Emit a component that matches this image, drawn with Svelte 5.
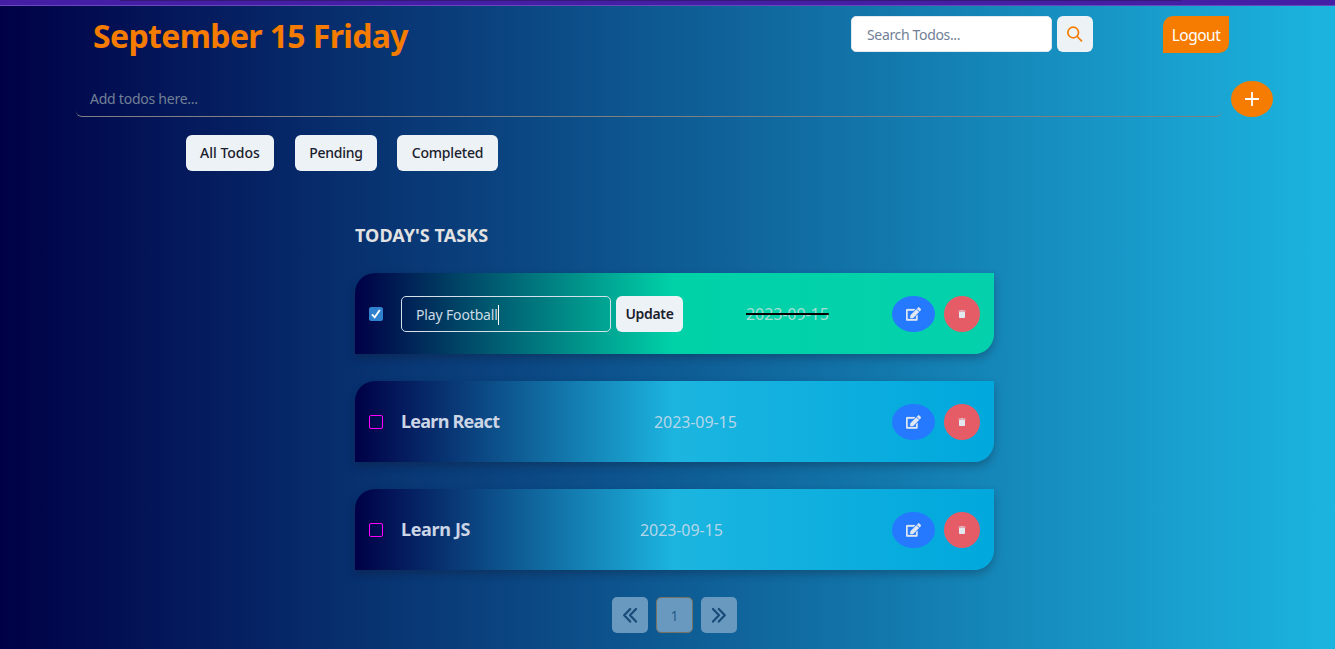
<script lang="ts">
  const tasks = [
    { id: 1, title: 'Play Football', date: '2023-09-15', done: true },
    { id: 2, title: 'Learn React', date: '2023-09-15', done: false },
    { id: 3, title: 'Learn JS', date: '2023-09-15', done: false }
  ];
</script>

<div class="page">
  <div class="strip"><i></i></div>
  <header>
    <h1>September 15 Friday</h1>
    <div class="search"><span>Search Todos...</span></div>
    <button class="find" aria-label="Search">
      <svg width="16" height="16" viewBox="0 0 16 16" fill="none" stroke="#f57c00" stroke-width="1.7" stroke-linecap="round"><circle cx="6.2" cy="6.5" r="5.3" /><path d="M10.200 10.500 14.500 14.800" /></svg>
    </button>
    <button class="logout">Logout</button>
  </header>

  <div class="add">
    <div class="field"><span>Add todos here...</span></div>
    <button aria-label="Add">
      <svg width="14" height="14" viewBox="0 0 14 14" stroke="#fff" stroke-width="1.8"><path d="M7 0V14M0 7H14" /></svg>
    </button>
  </div>

  <nav>
    <button class="f1"><span>All Todos</span></button>
    <button class="f2"><span>Pending</span></button>
    <button class="f3"><span>Completed</span></button>
  </nav>

  <main>
    <h2>TODAY'S TASKS</h2>
    {#each tasks as t (t.id)}
      <article class:done={t.done}>
        <div class="check" class:on={t.done}>
          {#if t.done}
            <svg width="10" height="10" viewBox="0 0 10 10" fill="none" stroke="#fff" stroke-width="1.9"><path d="M1 5.4 3.7 8.3 8.8 1" /></svg>
          {/if}
        </div>
        {#if t.done}
          <div class="edit"><span>{t.title}</span><i></i></div>
          <button class="update"><span>Update</span></button>
        {:else}
          <h3 class="h{t.id}">{t.title}</h3>
        {/if}
        <time class="t{t.id}">{t.date}</time>
        <div class="actions">
          <button class="pen" aria-label="Edit">
            <svg width="15" height="14" viewBox="0 0 576 512" fill="#dfe8f2" stroke="#dfe8f2" stroke-width="8"><path d="M402.6 83.2l90.2 90.2c3.8 3.8 3.8 10 0 13.800L274.400 405.600l-92.800 10.300c-12.400 1.400-22.900-9.100-21.500-21.500l10.300-92.800L388.800 83.200c3.800-3.800 10-3.800 13.800 0zm162-22.900l-48.800-48.800c-15.200-15.200-39.900-15.200-55.200 0l-35.400 35.400c-3.800 3.800-3.800 10 0 13.800l90.200 90.200c3.800 3.800 10 3.800 13.800 0l35.400-35.400c15.200-15.300 15.200-40 0-55.200zM384 346.200V448H64V128h229.800c3.200 0 6.200-1.300 8.500-3.500l40-40c7.600-7.600 2.200-20.500-8.500-20.500H48C21.500 64 0 85.500 0 112v352c0 26.500 21.500 48 48 48h352c26.500 0 48-21.500 48-48V306.200c0-10.700-12.900-16-20.500-8.500l-40 40c-2.200 2.300-3.500 5.300-3.500 8.500z" /></svg>
          </button>
          <button class="bin" aria-label="Delete">
            <svg width="8" height="8" viewBox="0 0 8 8" fill="#e2e8f0"><path opacity=".75" d="M.5.5H2.700L3 0H5L5.300.5H7.500V1.500H.5Z" /><path d="M1 1.700H7V7.200Q7 8 6.200 8H1.800Q1 8 1 7.200Z" /></svg>
          </button>
        </div>
      </article>
    {/each}
    <footer>
      <button aria-label="Previous"><svg width="16" height="16" viewBox="0 0 16 16" fill="none" stroke="#184b78" stroke-width="2.2" stroke-linecap="round" stroke-linejoin="round"><path d="M8.200 2 2.200 8.300 8.200 14.600M14 2 8 8.300 14 14.600" /></svg></button>
      <button class="num">1</button>
      <button aria-label="Next"><svg width="16" height="16" viewBox="0 0 16 16" fill="none" stroke="#184b78" stroke-width="2.2" stroke-linecap="round" stroke-linejoin="round"><path d="M2 2 8 8.300 2 14.600M7.800 2 13.800 8.300 7.800 14.600" /></svg></button>
    </footer>
  </main>
</div>

<style>
  :global(body) { margin: 0; }
  .page { box-sizing: border-box; width: 1335px; height: 649px; overflow: hidden; background: linear-gradient(to right, #000046, #1cb5e0); font-family: 'Noto Sans', 'Open Sans', sans-serif; color: #e2e8f0; }
  button { font: inherit; border: 0; margin: 0; padding: 0; display: flex; align-items: center; justify-content: center; flex: none; box-sizing: border-box; white-space: nowrap; }
  span, h1, h2, h3, time { white-space: nowrap; }
  .strip { box-sizing: border-box; height: 6px; background: #451ea6; border-bottom: 1px solid #6848bd; }
  .strip i { display: block; height: 1px; margin: 0 154px 0 120px; background: #351979; }
  header { display: flex; padding: 10px 0 0 93px; height: 59px; box-sizing: content-box; }
  h1 { margin: 0; width: 758px; font-size: 32px; line-height: 40px; font-weight: 700; letter-spacing: -.64px; color: #f57c00; }
  .search { box-sizing: border-box; width: 201px; height: 36px; border: 1px solid #e2e8f0; border-radius: 5px; background: #fff; color: #718096; font-size: 14px; letter-spacing: -.34px; line-height: 36px; padding-left: 15px; }
  .find { width: 36px; height: 36px; margin-left: 5px; border-radius: 6px; background: #edf2f7; }
  .logout { width: 66px; height: 37px; margin-left: 70px; background: #f57c00; color: #fff; font-size: 15.5px; letter-spacing: -.5px; border-radius: 10px 0; }
  .add { display: flex; margin: 6px 0 0 76px; height: 36px; }
  .field { box-sizing: border-box; width: 1146px; height: 36px; border-bottom: 1px solid #808080; border-radius: 6px; padding-left: 14px; font-size: 14px; letter-spacing: -.24px; line-height: 36px; color: #718096; }
  .add button { width: 42px; height: 36px; margin-left: 9px; border-radius: 50%; background: #f57c00; }
  nav { display: flex; margin: 18px 0 0 186px; height: 36px; }
  nav button, .update { height: 36px; border-radius: 6px; background: #edf2f7; color: #1a202c; font-size: 14px; font-weight: 500; }
  nav button { padding-bottom: 1px; }
  .f1 { width: 88px; }
  .f2 { width: 82px; margin-left: 21px; letter-spacing: -.25px; }
  .f3 { width: 101px; margin-left: 20px; letter-spacing: -.2px; }
  main { width: 639px; margin: 53px 0 0 355px; }
  h2 { margin: 0; height: 49px; font-size: 18px; line-height: 22px; font-weight: 700; letter-spacing: .06px; color: #e2e2e2; }
  article { box-sizing: border-box; display: flex; align-items: center; height: 81px; margin-bottom: 27px; padding: 0 14px; border-radius: 20px 0; background: linear-gradient(to right, #000046, #1cb5e0 50%, #00a8dd); box-shadow: 0 4px 8px rgba(20, 20, 35, .3); }
  article.done { background: linear-gradient(to right, #000046, #00d2a8 50%, #04d1ac); }
  .check { box-sizing: border-box; width: 14px; height: 14px; border: 1px solid #f0f; border-radius: 2px; flex: none; display: flex; align-items: center; justify-content: center; }
  .check.on { border-color: #3182ce; background: #3182ce; }
  h3 { margin: 0 0 0 18px; padding-bottom: 2px; font-size: 18px; line-height: 24px; font-weight: 700; color: #cbd5e6; width: 100px; }
  .h2 { letter-spacing: -.75px; }
  .h3 { letter-spacing: -.35px; }
  .edit { box-sizing: border-box; display: flex; align-items: center; width: 210px; height: 36px; margin-left: 18px; padding: 2px 0 0 14px; border: 1px solid #d5e0ea; border-radius: 5px; font-size: 14px; letter-spacing: -.15px; color: #cbdce6; }
  .edit i { width: 1px; height: 20px; background: #fff; }
  .update { width: 67px; margin-left: 5px; font-weight: 600; letter-spacing: -.3px; }
  time { font-size: 16px; line-height: 24px; letter-spacing: -.08px; color: #b5d6e8; }
  .t1 { margin-left: 63px; color: #a5dfd4; text-decoration: line-through 2px #000; }
  .t2 { margin-left: 153px; }
  .t3 { margin-left: 139px; }
  .actions { display: flex; gap: 9px; margin-left: auto; }
  .pen { width: 43px; height: 36px; border-radius: 50%; background: #2579ff; }
  .bin { width: 36px; height: 36px; border-radius: 50%; background: #e65c66; }
  footer { display: flex; gap: 8px; padding-left: 257px; }
  footer button { width: 36px; height: 36px; border-radius: 5px; background: #6999bf; color: #285b89; font-size: 14px; }
  footer .num { width: 37px; border: 1px solid #777261; }
</style>
